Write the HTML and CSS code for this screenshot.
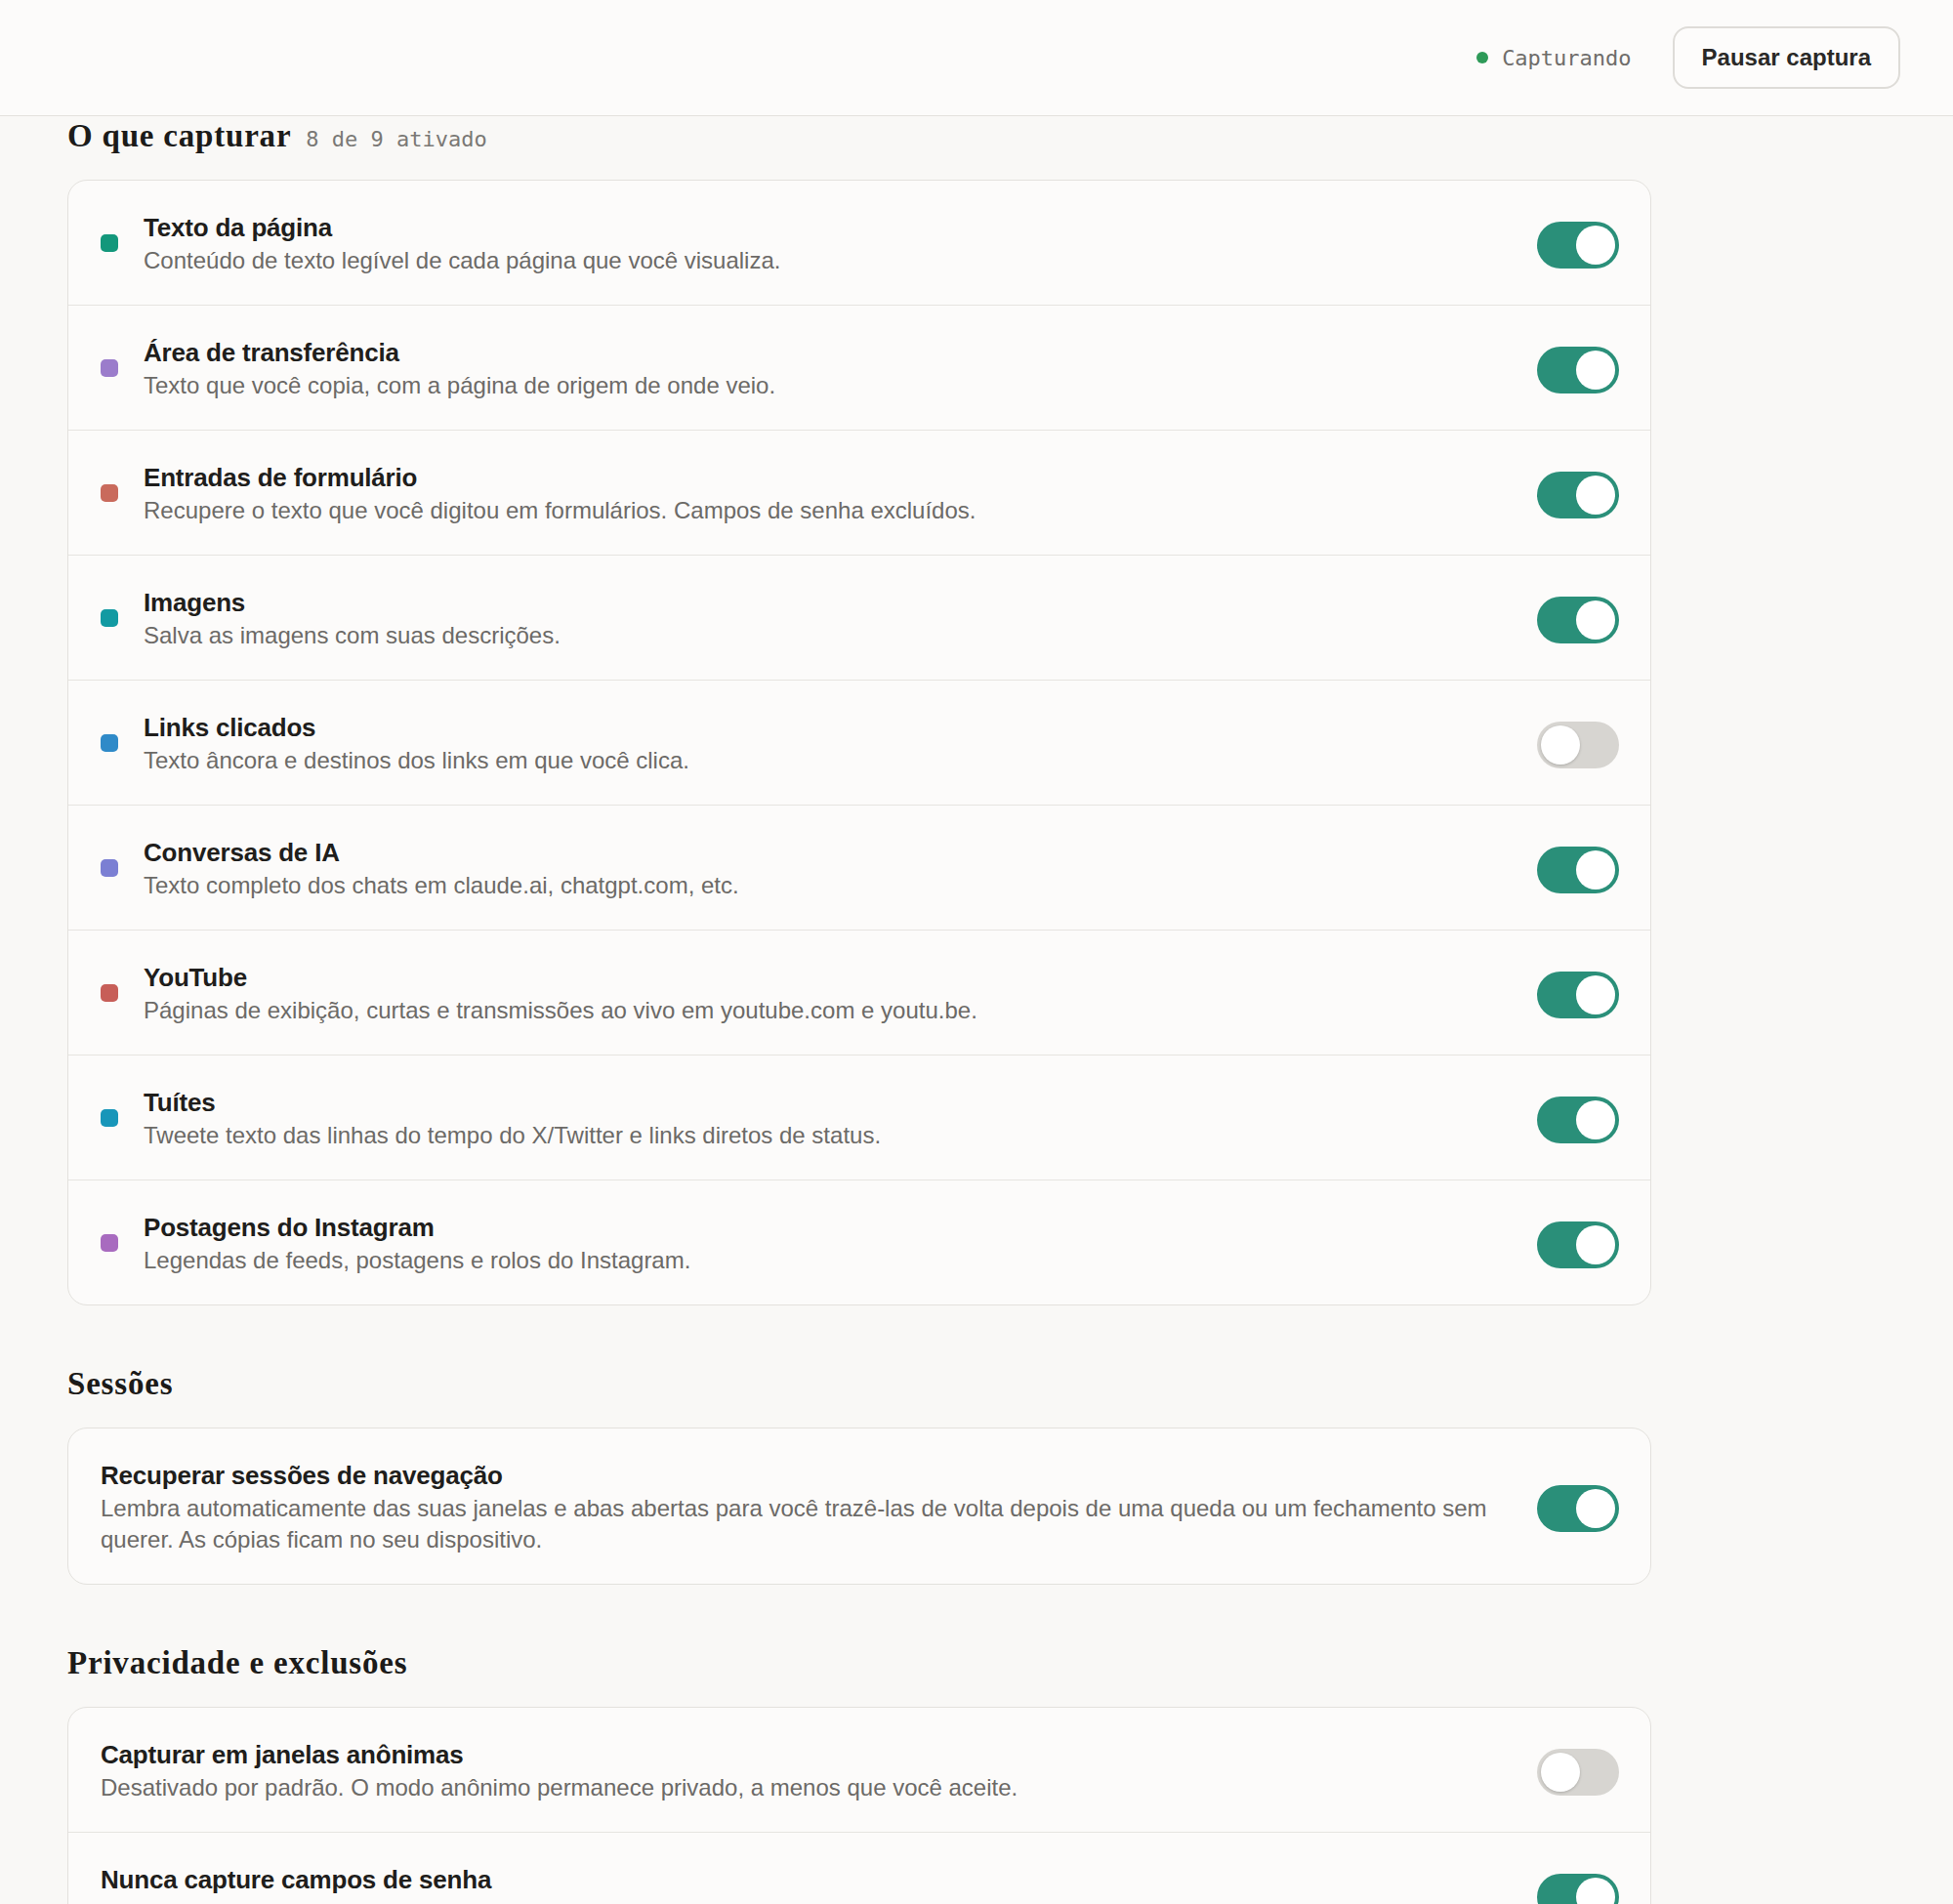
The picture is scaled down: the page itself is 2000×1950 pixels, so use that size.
FILE: index.html
```
<!DOCTYPE html>
<html lang="pt-BR">
<head>
    <meta charset="utf-8">
    <title>Configurações de captura</title>
    <link rel="stylesheet" href="styles.css">
</head>
<body>
    <!-- Barra superior -->
    <header class="topbar">
        <div class="status"><span class="status-dot"></span>Capturando</div>
        <button class="btn-pause">Pausar captura</button>
    </header>

    <main class="page">
        <!-- O que capturar -->
        <section class="section">
            <div class="section-head">
                <h2 class="section-title">O que capturar</h2>
                <span class="section-count">8 de 9 ativado</span>
            </div>
            <div class="card">
                <div class="row">
                    <span class="dot dot-page"></span>
                    <div class="row-text">
                        <div class="row-title">Texto da página</div>
                        <div class="row-desc">Conteúdo de texto legível de cada página que você visualiza.</div>
                    </div>
                    <span class="toggle on"></span>
                </div>
                <div class="row">
                    <span class="dot dot-clip"></span>
                    <div class="row-text">
                        <div class="row-title">Área de transferência</div>
                        <div class="row-desc">Texto que você copia, com a página de origem de onde veio.</div>
                    </div>
                    <span class="toggle on"></span>
                </div>
                <div class="row">
                    <span class="dot dot-form"></span>
                    <div class="row-text">
                        <div class="row-title">Entradas de formulário</div>
                        <div class="row-desc">Recupere o texto que você digitou em formulários. Campos de senha excluídos.</div>
                    </div>
                    <span class="toggle on"></span>
                </div>
                <div class="row">
                    <span class="dot dot-img"></span>
                    <div class="row-text">
                        <div class="row-title">Imagens</div>
                        <div class="row-desc">Salva as imagens com suas descrições.</div>
                    </div>
                    <span class="toggle on"></span>
                </div>
                <div class="row">
                    <span class="dot dot-link"></span>
                    <div class="row-text">
                        <div class="row-title">Links clicados</div>
                        <div class="row-desc">Texto âncora e destinos dos links em que você clica.</div>
                    </div>
                    <span class="toggle"></span>
                </div>
                <div class="row">
                    <span class="dot dot-ai"></span>
                    <div class="row-text">
                        <div class="row-title">Conversas de IA</div>
                        <div class="row-desc">Texto completo dos chats em claude.ai, chatgpt.com, etc.</div>
                    </div>
                    <span class="toggle on"></span>
                </div>
                <div class="row">
                    <span class="dot dot-yt"></span>
                    <div class="row-text">
                        <div class="row-title">YouTube</div>
                        <div class="row-desc">Páginas de exibição, curtas e transmissões ao vivo em youtube.com e youtu.be.</div>
                    </div>
                    <span class="toggle on"></span>
                </div>
                <div class="row">
                    <span class="dot dot-tw"></span>
                    <div class="row-text">
                        <div class="row-title">Tuítes</div>
                        <div class="row-desc">Tweete texto das linhas do tempo do X/Twitter e links diretos de status.</div>
                    </div>
                    <span class="toggle on"></span>
                </div>
                <div class="row">
                    <span class="dot dot-ig"></span>
                    <div class="row-text">
                        <div class="row-title">Postagens do Instagram</div>
                        <div class="row-desc">Legendas de feeds, postagens e rolos do Instagram.</div>
                    </div>
                    <span class="toggle on"></span>
                </div>
            </div>
        </section>

        <!-- Sessões -->
        <section class="section">
            <div class="section-head">
                <h2 class="section-title">Sessões</h2>
            </div>
            <div class="card">
                <div class="row">
                    <div class="row-text">
                        <div class="row-title">Recuperar sessões de navegação</div>
                        <div class="row-desc">Lembra automaticamente das suas janelas e abas abertas para você trazê-las de volta depois de uma queda ou um fechamento sem querer. As cópias ficam no seu dispositivo.</div>
                    </div>
                    <span class="toggle on"></span>
                </div>
            </div>
        </section>

        <!-- Privacidade -->
        <section class="section">
            <div class="section-head">
                <h2 class="section-title">Privacidade e exclusões</h2>
            </div>
            <div class="card">
                <div class="row">
                    <div class="row-text">
                        <div class="row-title">Capturar em janelas anônimas</div>
                        <div class="row-desc">Desativado por padrão. O modo anônimo permanece privado, a menos que você aceite.</div>
                    </div>
                    <span class="toggle"></span>
                </div>
                <div class="row">
                    <div class="row-text">
                        <div class="row-title">Nunca capture campos de senha</div>
                        <div class="row-desc">Mesmo com entradas de formulário ativadas, as senhas nunca são salvas.</div>
                    </div>
                    <span class="toggle on"></span>
                </div>
            </div>
        </section>
    </main>
</body>
</html>
```

FILE: styles.css
```
body {
    margin: 0;
    background: #f9f8f6;
    font-family: "Liberation Sans", Arial, sans-serif;
    color: #1f1e1c;
}

/* barra superior */
.topbar {
    height: 118px;
    display: flex;
    align-items: center;
    justify-content: flex-end;
    gap: 42px;
    padding: 0 54px;
    background: #fcfbfa;
    border-bottom: 1px solid #e3e1dd;
}
.status {
    display: flex;
    align-items: center;
    gap: 14px;
    font-family: "DejaVu Sans Mono", "Liberation Mono", monospace;
    font-size: 22px;
    color: #6f6d6a;
}
.status-dot {
    width: 12px;
    height: 12px;
    border-radius: 50%;
    background: #2e9a58;
}
.btn-pause {
    height: 64px;
    padding: 0 28px;
    background: #fdfcfb;
    border: 2px solid #dedcd8;
    border-radius: 16px;
    font-family: "Liberation Sans", Arial, sans-serif;
    font-size: 24px;
    font-weight: bold;
    color: #2a2927;
}

/* konten */
.page {
    width: 1622px;
    margin-left: 69px;
}
.section + .section {
    margin-top: 60px;
}
.section-head {
    display: flex;
    align-items: baseline;
    gap: 15px;
    height: 40px;
    margin-bottom: 25px;
}
.section-title {
    margin: 0;
    font-family: "Liberation Serif", "Times New Roman", serif;
    font-size: 33px;
    line-height: 40px;
    letter-spacing: 0.8px;
    font-weight: bold;
    color: #1c1b19;
}
.section-count {
    font-family: "DejaVu Sans Mono", "Liberation Mono", monospace;
    font-size: 22px;
    color: #7a7875;
}

.card {
    background: #fcfbfa;
    border: 1px solid #e3e1dd;
    border-radius: 20px;
    overflow: hidden;
}
.row {
    display: flex;
    align-items: center;
    padding: 30px 32px 29px 33px;
}
.row + .row {
    border-top: 1px solid #e6e4e0;
}
.dot {
    width: 18px;
    height: 18px;
    border-radius: 5px;
    margin-right: 26px;
    flex-shrink: 0;
}
.dot-page { background: #13977b; }
.dot-clip { background: #9b7ccb; }
.dot-form { background: #c96a5c; }
.dot-img { background: #129aa2; }
.dot-link { background: #2f8ac8; }
.dot-ai { background: #7b7fd3; }
.dot-yt { background: #c75e58; }
.dot-tw { background: #1896b9; }
.dot-ig { background: #a86bbf; }

.row-text {
    flex: 1;
    margin-right: 32px;
}
.row-title {
    font-size: 26px;
    line-height: 36px;
    font-weight: bold;
    letter-spacing: -0.2px;
    color: #1f1e1c;
}
.row-desc {
    font-size: 24px;
    line-height: 32px;
    color: #6c6a67;
}

/* saklar */
.toggle {
    position: relative;
    width: 84px;
    height: 48px;
    margin-top: 3px;
    border-radius: 24px;
    background: #d7d5d1;
    flex-shrink: 0;
}
.toggle::after {
    content: "";
    position: absolute;
    left: 4px;
    top: 4px;
    width: 40px;
    height: 40px;
    border-radius: 50%;
    background: #fff;
    box-shadow: 0 1px 3px rgba(0, 0, 0, 0.2);
}
.toggle.on {
    background: #2a8f79;
}
.toggle.on::after {
    left: 40px;
    box-shadow: none;
}
```
